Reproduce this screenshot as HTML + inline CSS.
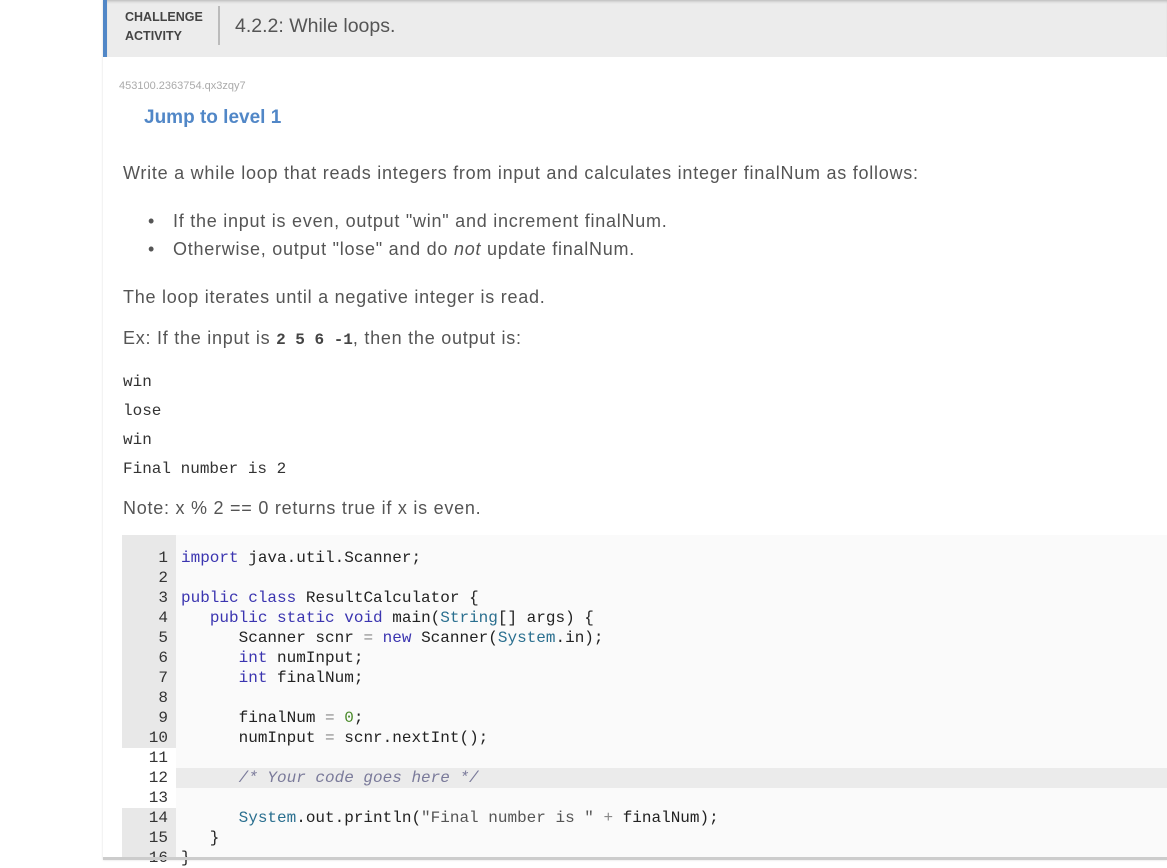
<!DOCTYPE html>
<html><head><meta charset="utf-8">
<style>
*{margin:0;padding:0;box-sizing:border-box}
body{width:1167px;height:860px;overflow:hidden;background:#fff;font-family:"Liberation Sans",sans-serif;color:#555;position:relative}
.panel{position:absolute;left:103px;top:0;width:1064px;height:860px;background:#fff;box-shadow:0 0 2px rgba(0,0,0,.15)}
.hdr{position:absolute;left:0;top:0;width:1064px;height:57px;background:#ececec;border-left:4px solid #5187c7;box-shadow:inset 0 3px 3px -2px rgba(0,0,0,.25)}
.ca{position:absolute;left:18px;top:8px;font-size:12.5px;font-weight:bold;color:#444;line-height:19px}
.sep{position:absolute;left:111px;top:6px;width:2px;height:39px;background:#bbb}
.ttl{position:absolute;left:128px;top:15px;font-size:19.5px;color:#555}
.t{position:absolute;font-size:18px;letter-spacing:0.75px;white-space:nowrap}
.mono{font-family:"Liberation Mono",monospace;letter-spacing:0}
.code{position:absolute;left:19px;top:535px;width:1045px;height:325px;background:#fafafa;font-family:"Liberation Mono",monospace;font-size:16px}
.gut{position:absolute;left:0;top:0;width:54px;height:325px;background:#e8e8e8}
.ln{position:absolute;left:0;width:46px;text-align:right;color:#333;height:20px;line-height:20px}
.cl{position:absolute;left:59px;height:20px;line-height:20px;white-space:pre;color:#222}
.k{color:#3b35b0}.s{color:#2a6f8f}.n{color:#4a8a2a}.c{color:#7a7a9a;font-style:italic}.op{color:#888}
.b{position:absolute;left:45px;font-size:18px}
</style></head><body>
<div class="panel">
<div class="hdr"><div class="ca">CHALLENGE<br>ACTIVITY</div><div class="sep"></div><div class="ttl">4.2.2: While loops.</div></div>
<div class="t" style="left:16px;top:80px;font-size:11px;letter-spacing:0;color:#aaa">453100.2363754.qx3zqy7</div>
<div class="t" style="left:41px;top:107px;font-size:19px;letter-spacing:0;font-weight:bold;color:#5187c7">Jump to level 1</div>
<div class="t" style="left:20px;top:163px">Write a while loop that reads integers from input and calculates integer finalNum as follows:</div>
<div class="b" style="top:211px">•</div>
<div class="t" style="left:70px;top:211px">If the input is even, output "win" and increment finalNum.</div>
<div class="b" style="top:239px">•</div>
<div class="t" style="left:70px;top:239px">Otherwise, output "lose" and do <i>not</i> update finalNum.</div>
<div class="t" style="left:20px;top:287px">The loop iterates until a negative integer is read.</div>
<div class="t" style="left:20px;top:328px">Ex: If the input is <b class="mono" style="font-size:16px;color:#444">2 5 6 -1</b>, then the output is:</div>
<div class="t mono" style="left:20px;top:368px;font-size:16px;line-height:29px;color:#333">win<br>lose<br>win<br>Final number is 2</div>
<div class="t" style="left:20px;top:498px">Note: x % 2 == 0 returns true if x is even.</div>
<div class="code">
<div class="gut"></div>
<div style="position:absolute;left:0;top:213px;width:54px;height:60px;background:#fff"></div>
<div style="position:absolute;left:54px;top:233px;width:991px;height:20px;background:#ebebeb"></div>
<div class="ln" style="top:13px">1</div><div class="ln" style="top:33px">2</div><div class="ln" style="top:53px">3</div><div class="ln" style="top:73px">4</div><div class="ln" style="top:93px">5</div><div class="ln" style="top:113px">6</div><div class="ln" style="top:133px">7</div><div class="ln" style="top:153px">8</div><div class="ln" style="top:173px">9</div><div class="ln" style="top:193px">10</div><div class="ln" style="top:213px">11</div><div class="ln" style="top:233px">12</div><div class="ln" style="top:253px">13</div><div class="ln" style="top:273px">14</div><div class="ln" style="top:293px">15</div><div class="ln" style="top:313px">16</div>
<div class="cl" style="top:13px"><span class="k">import</span> java.util.Scanner;</div>
<div class="cl" style="top:53px"><span class="k">public</span> <span class="k">class</span> ResultCalculator {</div>
<div class="cl" style="top:73px">   <span class="k">public</span> <span class="k">static</span> <span class="k">void</span> main(<span class="s">String</span>[] args) {</div>
<div class="cl" style="top:93px">      Scanner scnr <span class="op">=</span> <span class="k">new</span> Scanner(<span class="s">System</span>.in);</div>
<div class="cl" style="top:113px">      <span class="k">int</span> numInput;</div>
<div class="cl" style="top:133px">      <span class="k">int</span> finalNum;</div>
<div class="cl" style="top:173px">      finalNum <span class="op">=</span> <span class="n">0</span>;</div>
<div class="cl" style="top:193px">      numInput <span class="op">=</span> scnr.nextInt();</div>
<div class="cl" style="top:233px">      <span class="c">/* Your code goes here */</span></div>
<div class="cl" style="top:273px">      <span class="s">System</span>.out.println(<span style="color:#555">"Final number is "</span> <span class="op">+</span> finalNum);</div>
<div class="cl" style="top:293px">   }</div>
<div class="cl" style="top:313px">}</div>
</div>
<div style="position:absolute;left:0;top:857px;width:1064px;height:3px;background:#ccc"></div>
</div>
</body></html>
